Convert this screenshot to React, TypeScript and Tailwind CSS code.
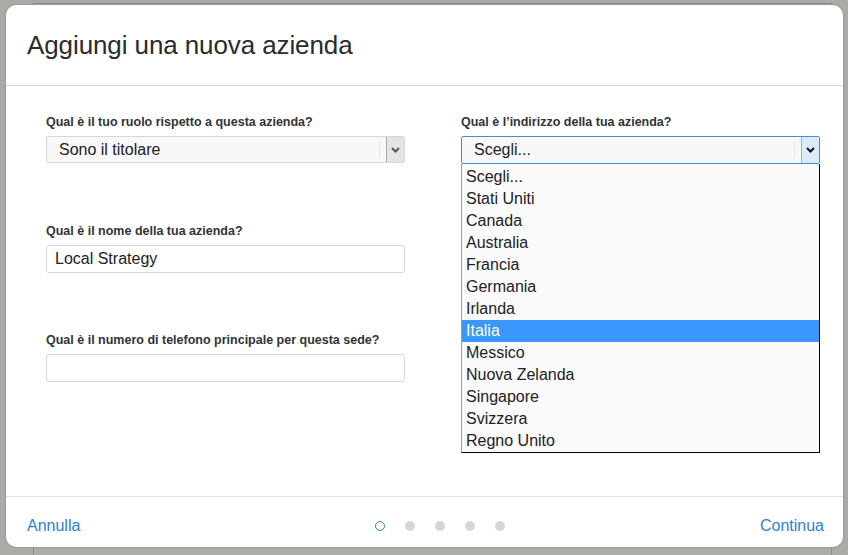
import React from "react";

const countries = [
  "Scegli...",
  "Stati Uniti",
  "Canada",
  "Australia",
  "Francia",
  "Germania",
  "Irlanda",
  "Italia",
  "Messico",
  "Nuova Zelanda",
  "Singapore",
  "Svizzera",
  "Regno Unito",
];

function Chevron({ color }: { color: string }) {
  return (
    <svg width="9" height="6" viewBox="0 0 9 6">
      <path d="M1 1 L4.5 4.5 L8 1" fill="none" stroke={color} strokeWidth="2" />
    </svg>
  );
}

function Label({ children }: { children: React.ReactNode }) {
  return (
    <div className="h-[16px] text-[12.5px] leading-[16px] font-semibold text-[#333] mb-[6px] whitespace-nowrap">
      {children}
    </div>
  );
}

export default function App() {
  return (
    <div
      className="relative w-[848px] h-[555px] bg-[#aaaaa6] overflow-hidden"
      style={{ fontFamily: '"Liberation Sans", Arial, sans-serif' }}
    >
      <div className="absolute left-[33px] top-[3px] w-[799px] h-[570px] border border-[#8e8e8a] bg-[#acaca8]" />
      <div className="absolute left-[6px] top-[5px] w-[837px] h-[542px] bg-white rounded-[10px] flex flex-col shadow-[0_0_2px_rgba(0,0,0,0.3)]">
        <div className="h-[81px] border-b border-[#d8d8d8] flex items-center pl-[21px] pt-[1px]">
          <div className="text-[26px] text-[#2b2b2b] tracking-[-0.1px]">Aggiungi una nuova azienda</div>
        </div>
        <div className="flex-1 grid grid-cols-[359px_359px] gap-x-[56px] pl-[40px] pt-[28px] border-b border-[#e2e2e2]">
          <div className="flex flex-col">
            <Label>Qual è il tuo ruolo rispetto a questa azienda?</Label>
            <div className="h-[27px] border border-[#d6d6d6] bg-[#f8f8f8] rounded-[2px] flex items-center">
              <div className="flex-1 pl-[12px] text-[16px] text-[#222]">Sono il titolare</div>
              <div className="w-px h-[16px] bg-[#e2e2e2] mr-[6px]" />
              <div className="w-[18px] h-[25px] bg-[#e4e4e4] border-l border-[#aaa] flex items-center justify-center">
                <Chevron color="#555" />
              </div>
            </div>

            <div className="mt-[60px]">
              <Label>Qual è il nome della tua azienda?</Label>
              <div className="h-[28px] border border-[#d8d8d8] rounded-[3px] flex items-center pl-[8px] text-[16px] text-[#222]">
                Local Strategy
              </div>
            </div>

            <div className="mt-[59px]">
              <Label>Qual è il numero di telefono principale per questa sede?</Label>
              <div className="h-[28px] border border-[#d8d8d8] rounded-[3px]" />
            </div>
          </div>

          <div className="flex flex-col">
            <Label>Qual è l’indirizzo della tua azienda?</Label>
            <div className="relative">
              <div className="h-[28px] border border-[#3c8fdc] bg-[#f8f8f8] rounded-[2px] flex items-center">
                <div className="flex-1 pl-[12px] text-[16px] text-[#222]">Scegli...</div>
                <div className="w-px h-[16px] bg-[#e2e2e2] mr-[6px]" />
                <div className="w-[18px] h-[26px] bg-[#dcebf9] border-l border-[#8ab8e6] flex items-center justify-center">
                  <Chevron color="#111" />
                </div>
              </div>
              <div className="absolute left-0 top-[28px] w-[359px] pt-[2px] bg-[#fafafa] border border-t-0 border-black border-l-[#a0a0a0] z-10">
                {countries.map((c) => (
                  <div
                    key={c}
                    className={
                      c === "Italia"
                        ? "h-[22px] leading-[22px] pl-[4px] text-[16px] bg-[#3a96fb] text-white"
                        : "h-[22px] leading-[22px] pl-[4px] text-[16px] text-[#222]"
                    }
                  >
                    {c}
                  </div>
                ))}
              </div>
            </div>
          </div>
        </div>
        <div className="h-[50px] flex items-center justify-between px-[19px] pt-[7px]">
          <div className="text-[16px] text-[#2f7fd5] w-[100px] pl-[2px]">Annulla</div>
          <div className="flex items-center gap-[20px] ml-[160px]">
            <div className="w-[10px] h-[10px] rounded-full border-[1.5px] border-[#2f7fd5]" />
            <div className="w-[10px] h-[10px] rounded-full bg-[#d6d6d6]" />
            <div className="w-[10px] h-[10px] rounded-full bg-[#d6d6d6]" />
            <div className="w-[10px] h-[10px] rounded-full bg-[#d6d6d6]" />
            <div className="w-[10px] h-[10px] rounded-full bg-[#d6d6d6]" />
          </div>
          <div className="text-[16px] text-[#2f7fd5] w-[230px] text-right">Continua</div>
        </div>
      </div>
    </div>
  );
}
